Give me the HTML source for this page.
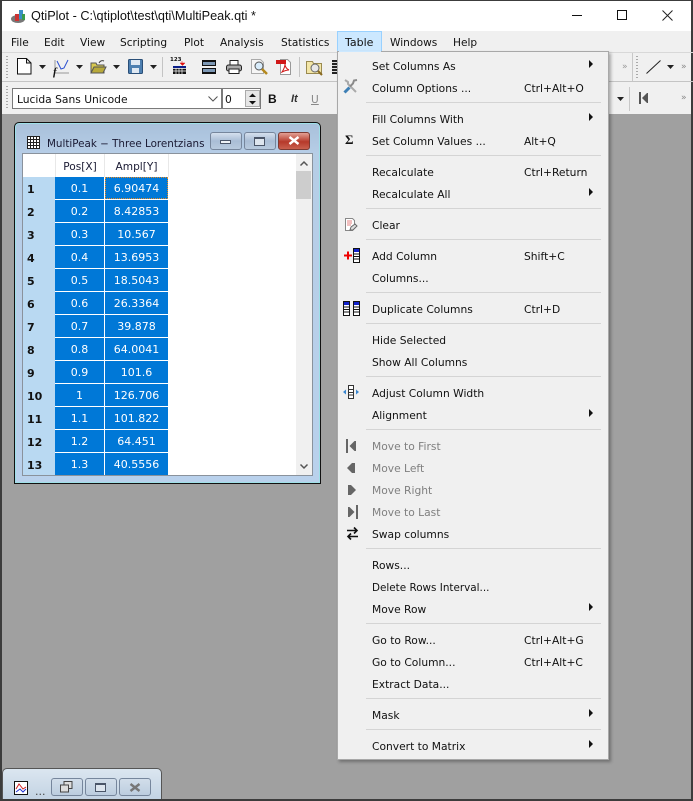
<!DOCTYPE html>
<html><head><meta charset="utf-8"><style>
*{box-sizing:border-box}
html,body{margin:0;padding:0}
body{width:693px;height:801px;overflow:hidden;position:relative;background:#a0a0a0;font:11px "DejaVu Sans","Liberation Sans",sans-serif;color:#111}
.a{position:absolute}
.t{position:absolute;white-space:nowrap;line-height:14px}
.mi{position:absolute;left:372px;margin-top:1px;white-space:nowrap;line-height:14px;color:#111;font-size:10.7px}
.sc{position:absolute;left:524px;margin-top:1px;white-space:nowrap;line-height:14px;font-size:10.7px}
.d{color:#7f7f7f}
.sep{position:absolute;left:366px;width:235px;height:1px;background:#d4d4d4}
.arr{position:absolute;left:589px;width:0;height:0;border-left:4px solid #111;border-top:4px solid transparent;border-bottom:4px solid transparent}
.mb{position:absolute;top:36px;line-height:14px;font-size:10.6px}
.rh{position:absolute;left:23px;width:32px;height:23px;background:#b9d9f2;font-weight:bold;font-size:11px;line-height:25px;padding-left:4px;color:#111}
.c{position:absolute;height:22px;background:#0078d7;color:#fff;text-align:center;line-height:24px;font-size:11px}
.btn{position:absolute;border:1px solid #76869c;border-radius:3px;background:linear-gradient(#d5e0ee,#a9bdd5 50%,#b8cade)}
svg{position:absolute;overflow:visible}
</style></head><body>
<!-- window chrome -->
<div class="a" style="left:0;top:0;width:693px;height:114px;background:#f0f0f0"></div>
<div class="a" style="left:0;top:0;width:693px;height:31px;background:#fff"></div>
<div class="a" style="left:0;top:0;width:693px;height:1px;background:#3c3c3c"></div>
<div class="a" style="left:0;top:0;width:2px;height:801px;background:#3c3c3c"></div>
<div class="a" style="right:0;top:0;width:2px;height:801px;background:#3c3c3c"></div>
<div class="a" style="left:0;top:799px;width:693px;height:2px;background:#3c3c3c"></div>

<svg style="left:10px;top:7px" width="18" height="18" viewBox="0 0 18 18"><ellipse cx="8" cy="12" rx="7" ry="4" fill="#777"/><rect x="5" y="7" width="4" height="7" fill="#c33"/><rect x="9" y="3" width="4" height="9" fill="#3a8fc4"/><rect x="12" y="7" width="3" height="6" fill="#3b9c4a"/></svg>
<div class="t" style="left:31px;top:9px;font-family:'Liberation Sans',sans-serif;font-size:12.7px;color:#111">QtiPlot - C:\qtiplot\test\qti\MultiPeak.qti *</div>
<div class="a" style="left:572px;top:15px;width:10px;height:1px;background:#111"></div>
<div class="a" style="left:617px;top:10px;width:10px;height:10px;border:1px solid #111"></div>
<svg style="left:662px;top:10px" width="11" height="11"><path d="M.5.5l10 10M10.500.5l-10 10" stroke="#222" fill="none"/></svg>

<!-- menu bar -->
<div class="mb" style="left:11px">File</div>
<div class="mb" style="left:44px">Edit</div>
<div class="mb" style="left:80px">View</div>
<div class="mb" style="left:120px">Scripting</div>
<div class="mb" style="left:184px">Plot</div>
<div class="mb" style="left:220px">Analysis</div>
<div class="mb" style="left:281px">Statistics</div>
<div class="a" style="left:337px;top:31px;width:45px;height:21px;background:#cce8ff;border:1px solid #99d1ff"></div>
<div class="mb" style="left:345px;font-size:11px">Table</div>
<div class="mb" style="left:390px">Windows</div>
<div class="mb" style="left:453px">Help</div>

<!-- toolbar 1 -->
<div class="a" style="left:2px;top:52px;width:691px;height:1px;background:#d8d8d8"></div>
<div class="a" style="left:2px;top:81px;width:691px;height:1px;background:#c4c4c4"></div>
<div class="a" style="left:6px;top:56px;width:2px;height:22px;background:repeating-linear-gradient(#aaa 0 1px,transparent 1px 3px)"></div>
<svg style="left:17px;top:58px" width="15" height="17"><path d="M.5.5h9l4.500 4.500v11h-13.500z M9.500.5v4.500h4.500" fill="#fff" stroke="#111"/></svg>
<svg style="left:39px;top:65px" width="7" height="4"><path d="M0 0h7L3.500 4z" fill="#222"/></svg>
<svg style="left:53px;top:59px" width="17" height="16"><path d="M2 1v13h14" fill="none" stroke="#999"/><path d="M4 2l4 8 3-1 4-8" fill="none" stroke="#2a4fd0"/><text x="0" y="16" font-family="Liberation Serif" font-size="11" font-weight="bold" font-style="italic" fill="#111">f</text></svg>
<svg style="left:76px;top:65px" width="7" height="4"><path d="M0 0h7L3.500 4z" fill="#222"/></svg>
<svg style="left:90px;top:59px" width="17" height="15"><path d="M1 4h5l1 2h7v8H1z" fill="#d8c94e" stroke="#555"/><path d="M1 14l3-6h12l-3 6z" fill="#b8a93a" stroke="#555"/><path d="M9 4c1-2 3-3 5-2" stroke="#444" fill="none"/></svg>
<svg style="left:113px;top:65px" width="7" height="4"><path d="M0 0h7L3.500 4z" fill="#222"/></svg>
<svg style="left:128px;top:59px" width="15" height="15"><rect x=".5" y=".5" width="14" height="14" rx="1" fill="#4d7fb0" stroke="#2a4f78"/><rect x="3" y="1" width="9" height="5" fill="#dfe8f2"/><rect x="4" y="9" width="7" height="5" fill="#dfe8f2"/></svg>
<svg style="left:150px;top:65px" width="7" height="4"><path d="M0 0h7L3.500 4z" fill="#222"/></svg>
<div class="a" style="left:162px;top:57px;width:1px;height:20px;background:#c4c4c4"></div>
<div class="t" style="left:170px;top:57px;font-size:5.500px;line-height:7px;font-weight:bold;color:#111">123</div>
<svg style="left:172px;top:60px" width="15" height="14"><path d="M10 1v3M8 3h5l-2.500 2.500z" fill="#e01010" stroke="#e01010" stroke-width=".5"/><rect x="1" y="6" width="13" height="8" fill="#111"/><path d="M1 8.500h13M1 11h13M4 6v8M7 6v8M10 6v8" stroke="#fff" stroke-width=".7"/><rect x="1" y="6" width="13" height="2" fill="#0a1f8a"/></svg>
<svg style="left:202px;top:60px" width="14" height="14"><rect width="14" height="6" fill="#111"/><rect x="1" y="2" width="12" height="3" fill="#7d98b5"/><rect y="8" width="14" height="6" fill="#111"/><rect x="1" y="9" width="12" height="3" fill="#7d98b5"/></svg>
<svg style="left:226px;top:60px" width="16" height="14"><rect x="4" y=".5" width="8" height="5" fill="#fff" stroke="#222"/><rect x=".5" y="5" width="15" height="6" rx="2" fill="#aaa" stroke="#222"/><rect x="3" y="9" width="10" height="4.500" fill="#fff" stroke="#222"/></svg>
<svg style="left:251px;top:59px" width="17" height="16"><path d="M.5.500h9l3 3v11H.5z" fill="#f5f5f5" stroke="#aaa"/><circle cx="8" cy="7" r="4" fill="#d8ecfb" stroke="#555"/><path d="M11 10l5 5" stroke="#b4891d" stroke-width="2.500"/></svg>
<svg style="left:276px;top:59px" width="16" height="16"><path d="M4.500.5h7l3 3v12h-10z" fill="#fff" stroke="#999"/><rect x="0" y="1" width="10" height="4" fill="#d01818"/><path d="M6 13c2-3 3-6 3-8 0 3 2 5 4 6-2 0-5 1-7 2z" fill="none" stroke="#d01818"/></svg>
<div class="a" style="left:299px;top:57px;width:1px;height:20px;background:#c4c4c4"></div>
<svg style="left:306px;top:59px" width="19" height="17"><path d="M.5 2.500h6l1 2h8v10H.5z" fill="#f3e6a8" stroke="#9a8a50"/><circle cx="9" cy="9" r="4" fill="#e8e8e8" stroke="#666"/><path d="M12 12l4 4" stroke="#8a6a20" stroke-width="2"/></svg>
<div class="a" style="left:332px;top:60px;width:6px;height:14px;background:repeating-linear-gradient(#222 0 2px,#ddd 2px 3px)"></div>
<div class="t" style="left:622px;top:60px;font-size:9px;color:#999">»</div>
<div class="a" style="left:632px;top:53px;width:1px;height:28px;background:#c8c8c8"></div>
<div class="a" style="left:636px;top:56px;width:2px;height:22px;background:repeating-linear-gradient(#aaa 0 1px,transparent 1px 3px)"></div>
<svg style="left:646px;top:60px" width="15" height="14"><path d="M.5 13.500l14-13" stroke="#222" fill="none"/></svg>
<svg style="left:667px;top:65px" width="7" height="4"><path d="M0 0h7L3.500 4z" fill="#222"/></svg>
<div class="t" style="left:681px;top:60px;font-size:9px;color:#888">»</div>

<!-- toolbar 2 -->
<div class="a" style="left:6px;top:86px;width:2px;height:24px;background:repeating-linear-gradient(#aaa 0 1px,transparent 1px 3px)"></div>
<div class="a" style="left:12px;top:88px;width:210px;height:21px;background:#fff;border:1px solid #7a7a7a"></div>
<div class="t" style="left:17px;top:93px;font-size:10.7px">Lucida Sans Unicode</div>
<svg style="left:208px;top:96px" width="10" height="6"><path d="M.5.500L5 5 9.500.5" stroke="#555" fill="none"/></svg>
<div class="a" style="left:222px;top:88px;width:39px;height:21px;background:#fff;border:1px solid #7a7a7a"></div>
<div class="t" style="left:225px;top:93px;font-size:10.7px">0</div>
<div class="a" style="left:245px;top:90px;width:15px;height:17px;background:#e6e6e6;border:1px solid #aaa"></div>
<svg style="left:248px;top:93px" width="9" height="12"><path d="M1 4h7L4.500.5zM1 8h7l-3.500 3.500z" fill="#111"/></svg>
<div class="t" style="left:268px;top:92px;font:bold 12px/14px 'Liberation Sans',sans-serif;color:#111">B</div>
<div class="t" style="left:291px;top:92px;font:italic bold 11px/14px 'Liberation Sans',sans-serif;color:#333">It</div>
<div class="t" style="left:311px;top:93px;font-size:10.600px;color:#888;text-decoration:underline">U</div>
<svg style="left:617px;top:97px" width="7" height="4"><path d="M0 0h7L3.500 4z" fill="#222"/></svg>
<div class="a" style="left:629px;top:87px;width:1px;height:24px;background:#c8c8c8"></div>
<svg style="left:639px;top:91px" width="12" height="14"><path d="M1 1v12" stroke="#555" stroke-width="2" fill="none"/><path d="M3 7l5-5h1v10H8z" fill="#555"/></svg>
<div class="t" style="left:681px;top:91px;font-size:9px;color:#888">»</div>

<!-- MDI subwindow -->
<div class="a" style="left:14px;top:122px;width:307px;height:362px;background:linear-gradient(#a8c0da 0,#b6cde6 30px,#b9d1ec 100%);border:1px solid #111;border-radius:5px 5px 0 0;box-shadow:inset 0 0 0 1px #9fe0e8"></div>
<svg style="left:27px;top:136px" width="13" height="13"><path d="M.5.500h12v12H.5zM.5 3.500h12M.5 6.500h12M.5 9.500h12M3.500.5v12M6.500.5v12M9.500.5v12" fill="#fff" stroke="#222"/></svg>
<div class="t" style="left:47px;top:137px;font-size:10.35px;color:#1a1a33">MultiPeak − Three Lorentzians</div>
<div class="btn" style="left:210px;top:132px;width:32px;height:18px"></div>
<div class="a" style="left:220px;top:140px;width:11px;height:4px;background:#eef2f6;border:1px solid #4a5568"></div>
<div class="btn" style="left:244px;top:132px;width:32px;height:18px"></div>
<div class="a" style="left:254px;top:137px;width:11px;height:9px;background:#dde5ee;border:1px solid #4a5568;border-top-width:2px"></div>
<div class="btn" style="left:278px;top:132px;width:32px;height:18px;background:linear-gradient(#e3a094,#b6392a 55%,#c9604e);border-color:#7c3a33"></div>
<svg style="left:288px;top:136px" width="12" height="9"><path d="M1.500 1l9 7M10.500 1l-9 7" stroke="#fff" stroke-width="2.400"/></svg>

<div class="a" style="left:22px;top:153px;width:291px;height:323px;background:#fff;border:1px solid #8a929c"></div>
<div class="t" style="left:56px;top:160px;width:48px;text-align:center;font-size:10.6px;color:#1a1a33">Pos[X]</div>
<div class="t" style="left:105px;top:160px;width:63px;text-align:center;font-size:10.6px;color:#1a1a33">Ampl[Y]</div>
<div class="a" style="left:55px;top:154px;width:1px;height:23px;background:#e8e8e8"></div>
<div class="a" style="left:104px;top:154px;width:1px;height:23px;background:#e8e8e8"></div>
<div class="a" style="left:168px;top:154px;width:1px;height:23px;background:#e8e8e8"></div>

<div class="rh" style="top:177px">1</div><div class="c" style="left:55px;top:177px;width:49px">0.1</div><div class="c" style="left:105px;top:177px;width:63px">6.90474</div>
<div class="a" style="left:105px;top:177px;width:63px;height:22px;border:1px dotted #e58a25"></div>
<div class="rh" style="top:200px">2</div><div class="c" style="left:55px;top:200px;width:49px">0.2</div><div class="c" style="left:105px;top:200px;width:63px">8.42853</div>
<div class="rh" style="top:223px">3</div><div class="c" style="left:55px;top:223px;width:49px">0.3</div><div class="c" style="left:105px;top:223px;width:63px">10.567</div>
<div class="rh" style="top:246px">4</div><div class="c" style="left:55px;top:246px;width:49px">0.4</div><div class="c" style="left:105px;top:246px;width:63px">13.6953</div>
<div class="rh" style="top:269px">5</div><div class="c" style="left:55px;top:269px;width:49px">0.5</div><div class="c" style="left:105px;top:269px;width:63px">18.5043</div>
<div class="rh" style="top:292px">6</div><div class="c" style="left:55px;top:292px;width:49px">0.6</div><div class="c" style="left:105px;top:292px;width:63px">26.3364</div>
<div class="rh" style="top:315px">7</div><div class="c" style="left:55px;top:315px;width:49px">0.7</div><div class="c" style="left:105px;top:315px;width:63px">39.878</div>
<div class="rh" style="top:338px">8</div><div class="c" style="left:55px;top:338px;width:49px">0.8</div><div class="c" style="left:105px;top:338px;width:63px">64.0041</div>
<div class="rh" style="top:361px">9</div><div class="c" style="left:55px;top:361px;width:49px">0.9</div><div class="c" style="left:105px;top:361px;width:63px">101.6</div>
<div class="rh" style="top:384px">10</div><div class="c" style="left:55px;top:384px;width:49px">1</div><div class="c" style="left:105px;top:384px;width:63px">126.706</div>
<div class="rh" style="top:407px">11</div><div class="c" style="left:55px;top:407px;width:49px">1.1</div><div class="c" style="left:105px;top:407px;width:63px">101.822</div>
<div class="rh" style="top:430px">12</div><div class="c" style="left:55px;top:430px;width:49px">1.2</div><div class="c" style="left:105px;top:430px;width:63px">64.451</div>
<div class="rh" style="top:453px;height:22px">13</div><div class="c" style="left:55px;top:453px;width:49px">1.3</div><div class="c" style="left:105px;top:453px;width:63px">40.5556</div>

<div class="a" style="left:296px;top:154px;width:16px;height:321px;background:#f0f0f0"></div>
<div class="a" style="left:296px;top:171px;width:15px;height:28px;background:#cdcdcd"></div>
<svg style="left:300px;top:161px" width="8" height="5"><path d="M.5 4.500L4 1l3.500 3.500" stroke="#555" stroke-width="1.500" fill="none"/></svg>
<svg style="left:300px;top:464px" width="8" height="5"><path d="M.5.500L4 4 7.500.5" stroke="#555" stroke-width="1.500" fill="none"/></svg>

<!-- minimized window -->
<div class="a" style="left:2px;top:768px;width:160px;height:31px;background:linear-gradient(#dbe6f0,#c3d3e3);border:1px solid #555;border-bottom:0;border-radius:5px 5px 0 0"></div>
<svg style="left:14px;top:781px" width="14" height="14"><rect x=".5" y=".5" width="13" height="13" fill="#fff" stroke="#111"/><path d="M2 8l3-5 4 5 3-2" stroke="#d02020" fill="none"/><path d="M2 11l4-3 3 3 3-3" stroke="#2030d0" fill="none"/></svg>
<div class="t" style="left:35px;top:785px;color:#444">...</div>
<div class="btn" style="left:51px;top:778px;width:32px;height:18px;background:linear-gradient(#d2deea,#bccddf)"></div>
<svg style="left:60px;top:781px" width="13" height="12"><rect x="4" y=".5" width="8" height="7" fill="#ddd" stroke="#444"/><rect x=".5" y="4" width="8" height="7" fill="#ddd" stroke="#444"/></svg>
<div class="btn" style="left:85px;top:778px;width:32px;height:18px;background:linear-gradient(#d2deea,#bccddf)"></div>
<div class="a" style="left:95px;top:783px;width:11px;height:9px;background:#dde5ee;border:1px solid #4a5568;border-top-width:2px"></div>
<div class="btn" style="left:119px;top:778px;width:32px;height:18px;background:linear-gradient(#d2deea,#bccddf)"></div>
<svg style="left:129px;top:783px" width="12" height="9"><path d="M1.500 1l9 7M10.500 1l-9 7" stroke="#777" stroke-width="2.400"/></svg>

<!-- Table menu -->
<div class="a" style="left:337px;top:51px;width:272px;height:709px;background:#f0f0f0;border:1px solid #a8a8a8;box-shadow:2px 2px 3px rgba(0,0,0,.3)"></div>
<div class="a" style="left:339px;top:51px;width:42px;height:1px;background:#cce8ff"></div>

<div class="mi" style="top:59px">Set Columns As</div><div class="arr" style="top:60px"></div>
<div class="mi" style="top:81px">Column Options ...</div><div class="sc" style="top:81px">Ctrl+Alt+O</div>
<div class="sep" style="top:102px"></div>
<div class="mi" style="top:112px">Fill Columns With</div><div class="arr" style="top:113px"></div>
<div class="mi" style="top:134px">Set Column Values ...</div><div class="sc" style="top:134px">Alt+Q</div>
<div class="sep" style="top:155px"></div>
<div class="mi" style="top:165px">Recalculate</div><div class="sc" style="top:165px">Ctrl+Return</div>
<div class="mi" style="top:187px">Recalculate All</div><div class="arr" style="top:188px"></div>
<div class="sep" style="top:208px"></div>
<div class="mi" style="top:218px">Clear</div>
<div class="sep" style="top:239px"></div>
<div class="mi" style="top:249px">Add Column</div><div class="sc" style="top:249px">Shift+C</div>
<div class="mi" style="top:271px">Columns...</div>
<div class="sep" style="top:292px"></div>
<div class="mi" style="top:302px">Duplicate Columns</div><div class="sc" style="top:302px">Ctrl+D</div>
<div class="sep" style="top:323px"></div>
<div class="mi" style="top:333px">Hide Selected</div>
<div class="mi" style="top:355px">Show All Columns</div>
<div class="sep" style="top:376px"></div>
<div class="mi" style="top:386px">Adjust Column Width</div>
<div class="mi" style="top:408px">Alignment</div><div class="arr" style="top:409px"></div>
<div class="sep" style="top:429px"></div>
<div class="mi d" style="top:439px">Move to First</div>
<div class="mi d" style="top:461px">Move Left</div>
<div class="mi d" style="top:483px">Move Right</div>
<div class="mi d" style="top:505px">Move to Last</div>
<div class="mi" style="top:527px">Swap columns</div>
<div class="sep" style="top:548px"></div>
<div class="mi" style="top:558px">Rows...</div>
<div class="mi" style="top:580px;font-size:10.4px">Delete Rows Interval...</div>
<div class="mi" style="top:602px">Move Row</div><div class="arr" style="top:603px"></div>
<div class="sep" style="top:623px"></div>
<div class="mi" style="top:633px">Go to Row...</div><div class="sc" style="top:633px">Ctrl+Alt+G</div>
<div class="mi" style="top:655px">Go to Column...</div><div class="sc" style="top:655px">Ctrl+Alt+C</div>
<div class="mi" style="top:677px">Extract Data...</div>
<div class="sep" style="top:698px"></div>
<div class="mi" style="top:708px">Mask</div><div class="arr" style="top:709px"></div>
<div class="sep" style="top:729px"></div>
<div class="mi" style="top:739px">Convert to Matrix</div><div class="arr" style="top:740px"></div>

<!-- menu icons -->
<svg style="left:343px;top:79px" width="15" height="15"><path d="M2 1l3 2v2l8 8" stroke="#aaa" stroke-width="2" fill="none"/><path d="M14 1l-3 .5-1 3-3 3" stroke="#8a8a8a" stroke-width="2" fill="none"/><path d="M1.500 13.500l5-5" stroke="#3d7fb5" stroke-width="3"/></svg>
<div class="t" style="left:345px;top:133px;font:bold 13px/14px 'Liberation Serif',serif;color:#111">Σ</div>
<svg style="left:344px;top:218px" width="14" height="14"><path d="M1.500.5h7l2 2v5l-2 5h-7z" fill="#fff" stroke="#888"/><path d="M3 3h5M3 5h5M3 7h4" stroke="#e58080"/><path d="M7 9l4-3 2 2-4 4H6z" fill="#ddd" stroke="#666"/></svg>
<svg style="left:343px;top:248px" width="17" height="15"><path d="M1 7.500h8M5 3.500v8" stroke="#e00" stroke-width="2"/><rect x="10.500" y=".5" width="6" height="14" fill="#fff" stroke="#111"/><rect x="11" y="1" width="5" height="3" fill="#1122cc"/><path d="M11 6h5M11 8.500h5M11 11h5" stroke="#111"/></svg>
<svg style="left:343px;top:301px" width="17" height="15"><rect x=".5" y=".5" width="6" height="14" fill="#fff" stroke="#111"/><rect x="1" y="1" width="5" height="3" fill="#1122cc"/><path d="M1 6h5M1 8.500h5M1 11h5" stroke="#111"/><rect x="10.500" y=".5" width="6" height="14" fill="#fff" stroke="#111"/><rect x="11" y="1" width="5" height="3" fill="#1122cc"/><path d="M11 6h5M11 8.500h5M11 11h5" stroke="#111"/></svg>
<svg style="left:343px;top:385px" width="16" height="14"><rect x="5.500" y=".5" width="5" height="13" fill="#fff" stroke="#333"/><path d="M6 4.500h4M6 7.500h4M6 10h4" stroke="#333"/><path d="M0 7l3-2.500v5zM16 7l-3-2.500v5z" fill="#3a87d0"/></svg>
<svg style="left:346px;top:439px" width="12" height="14"><path d="M1 0v14" stroke="#666" stroke-width="2"/><path d="M3.500 7l5-5h1.500v10H8.500z" fill="#666"/></svg>
<svg style="left:347px;top:462px" width="9" height="12"><path d="M0 6l5-5h3v10H5z" fill="#666"/></svg>
<svg style="left:347px;top:484px" width="9" height="12"><path d="M9 6L4 1H1v10h3z" fill="#666"/></svg>
<svg style="left:346px;top:505px" width="12" height="14"><path d="M11 0v14" stroke="#666" stroke-width="2"/><path d="M8.500 7l-5-5H2v10h1.500z" fill="#666"/></svg>
<svg style="left:347px;top:527px" width="11" height="13"><path d="M0 3.500h9M7 .5l3 3-3 3M11 9.500H2M4 6.500l-3 3 3 3" stroke="#111" stroke-width="1.600" fill="none"/></svg>
</body></html>
